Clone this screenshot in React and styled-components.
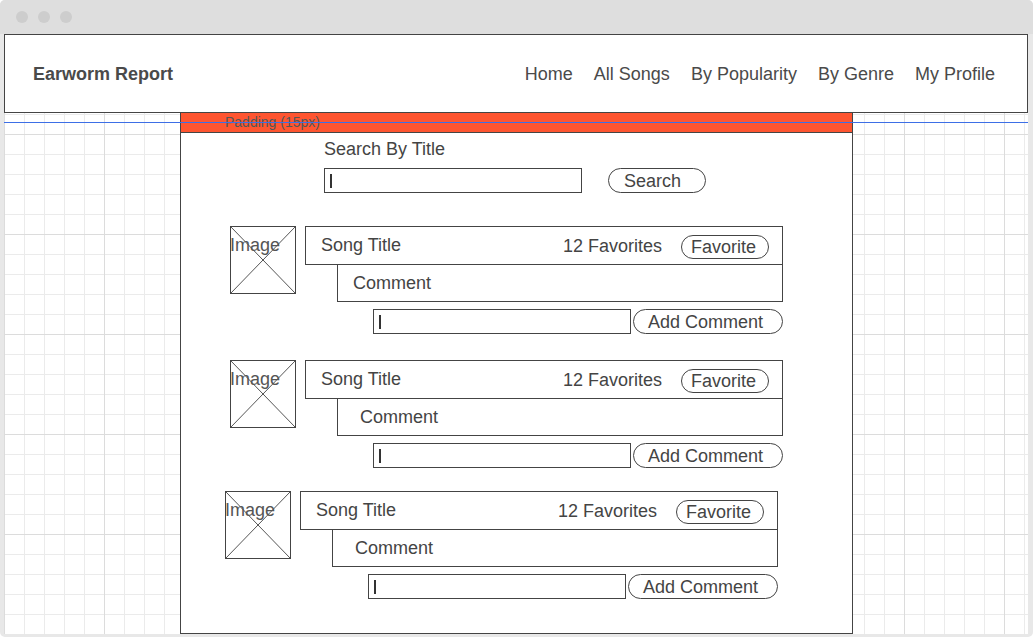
import React from "react";
import styled, { createGlobalStyle } from "styled-components";

const GlobalStyle = createGlobalStyle`
  html, body {
    margin: 0;
    padding: 0;
    background: #ffffff;
  }
  * {
    box-sizing: border-box;
  }
  body {
    font-family: "Liberation Sans", Arial, sans-serif;
    color: #444444;
  }
`;

const songs = [
  { id: 1, shift: 49, top: 33, indent: 15 },
  { id: 2, shift: 49, top: 26, indent: 22 },
  { id: 3, shift: 44, top: 23, indent: 22 },
];

const navLinks = ["Home", "All Songs", "By Popularity", "By Genre", "My Profile"];

const SongCard = ({ shift, top, indent }) => {
  return (
    <Card $shift={shift} $top={top}>
      <ImageBox>
        <Cross viewBox="0 0 64 66" preserveAspectRatio="none">
          <line x1="0" y1="0" x2="64" y2="66" />
          <line x1="64" y1="0" x2="0" y2="66" />
        </Cross>
        <ImageLabel>Image</ImageLabel>
      </ImageBox>
      <Details>
        <TitleBox>
          <span>Song Title</span>
          <Favorites>
            <span>12 Favorites</span>
            <Pill $width={88} $pad={9}>
              Favorite
            </Pill>
          </Favorites>
        </TitleBox>
        <CommentBox $indent={indent}>Comment</CommentBox>
        <CommentRow>
          <TextField $width={258}>
            <Caret />
          </TextField>
          <Pill $width={150} $pad={14} $height={25}>
            Add Comment
          </Pill>
        </CommentRow>
      </Details>
    </Card>
  );
};

const App = () => {
  return (
    <>
      <GlobalStyle />
      <Window>
        <TitleBar>
          <Dot />
          <Dot />
          <Dot />
        </TitleBar>
        <Viewport>
          <Guide />
          <Header>
            <Brand>Earworm Report</Brand>
            <Nav>
              {navLinks.map((link) => (
                <NavLink key={link}>{link}</NavLink>
              ))}
            </Nav>
          </Header>
          <Main>
            <Panel>
              <PaddingBand>Padding (15px)</PaddingBand>
              <Search>
                <SearchLabel>Search By Title</SearchLabel>
                <SearchRow>
                  <TextField $width={258}>
                    <Caret />
                  </TextField>
                  <Pill $width={98} $pad={15} $height={25}>
                    Search
                  </Pill>
                </SearchRow>
              </Search>
              {songs.map((song) => (
                <SongCard key={song.id} {...song} />
              ))}
            </Panel>
          </Main>
        </Viewport>
      </Window>
    </>
  );
};

export default App;

const Window = styled.div`
  width: 1033px;
  height: 637px;
  display: flex;
  flex-direction: column;
  background: #e8e8e8;
  border-radius: 5px;
  overflow: hidden;
`;

const TitleBar = styled.div`
  height: 34px;
  flex-shrink: 0;
  display: flex;
  align-items: center;
  gap: 10px;
  padding-left: 16px;
  background: #dedede;
`;

const Dot = styled.span`
  width: 12px;
  height: 12px;
  border-radius: 50%;
  background: #cdcdcd;
`;

const Viewport = styled.div`
  position: relative;
  flex: 1;
  display: flex;
  flex-direction: column;
  margin: 0 5px 3px 4px;
  background-color: #ffffff;
  background-image: linear-gradient(#dcdcdc 1px, transparent 1px),
    linear-gradient(90deg, #dcdcdc 1px, transparent 1px),
    linear-gradient(#ebebeb 1px, transparent 1px),
    linear-gradient(90deg, #ebebeb 1px, transparent 1px);
  background-size: 100px 100px, 100px 100px, 20px 20px, 20px 20px;
`;

const Guide = styled.div`
  position: absolute;
  top: 88px;
  left: 0;
  right: 0;
  height: 1px;
  background: #3d6fe6;
  z-index: 2;
`;

const Header = styled.header`
  height: 79px;
  flex-shrink: 0;
  display: flex;
  align-items: center;
  justify-content: space-between;
  padding: 2px 32px 0 28px;
  background: #ffffff;
  border: 1px solid #444444;
`;

const Brand = styled.div`
  font-size: 18px;
  font-weight: 700;
  color: #4a4a4a;
`;

const Nav = styled.nav`
  display: flex;
  gap: 21px;
`;

const NavLink = styled.span`
  font-size: 18px;
  color: #4a4a4a;
`;

const Main = styled.div`
  flex: 1;
  display: flex;
`;

const Panel = styled.section`
  width: 673px;
  margin-left: 176px;
  background: #ffffff;
  border: 1px solid #444444;
  border-top: none;
`;

const PaddingBand = styled.div`
  height: 20px;
  padding-left: 44px;
  background: #fe5530;
  border-bottom: 1px solid #444444;
  font-size: 14px;
  line-height: 19px;
  color: #555555;
`;

const Search = styled.div`
  padding: 6px 0 0 143px;
`;

const SearchLabel = styled.div`
  font-size: 18px;
  line-height: 21px;
`;

const SearchRow = styled.div`
  display: flex;
  gap: 26px;
  margin-top: 8px;
`;

const TextField = styled.div`
  width: ${(p) => p.$width}px;
  height: 25px;
  display: flex;
  align-items: center;
  padding-left: 5px;
  border: 1px solid #444444;
  background: #ffffff;
`;

const Caret = styled.span`
  width: 1.5px;
  height: 14px;
  background: #333333;
`;

const Pill = styled.div`
  width: ${(p) => p.$width}px;
  height: ${(p) => p.$height || 24}px;
  display: flex;
  align-items: center;
  padding-left: ${(p) => p.$pad}px;
  padding-top: 1px;
  border: 1px solid #444444;
  border-radius: 13px;
  background: #ffffff;
  font-size: 18px;
  line-height: 21px;
  white-space: nowrap;
`;

const Card = styled.div`
  display: flex;
  align-items: flex-start;
  margin-top: ${(p) => p.$top}px;
  padding-left: ${(p) => p.$shift}px;
`;

const ImageBox = styled.div`
  position: relative;
  width: 66px;
  height: 68px;
  flex-shrink: 0;
  padding-top: 8px;
  border: 1px solid #444444;
  font-size: 18px;
  line-height: 21px;
  color: #555555;
`;

const Cross = styled.svg`
  position: absolute;
  inset: 0;
  width: 100%;
  height: 100%;
  stroke: #555555;
  stroke-width: 1;
`;

const ImageLabel = styled.span`
  position: relative;
  margin-left: -1px;
`;

const Details = styled.div`
  width: 478px;
  margin-left: 9px;
`;

const TitleBox = styled.div`
  height: 39px;
  display: flex;
  align-items: center;
  justify-content: space-between;
  padding: 0 13px 0 15px;
  border: 1px solid #444444;
  font-size: 18px;
  line-height: 21px;
`;

const Favorites = styled.div`
  display: flex;
  align-items: center;
  gap: 19px;
  padding-top: 2px;
`;

const CommentBox = styled.div`
  height: 38px;
  margin: -1px 0 0 32px;
  display: flex;
  align-items: center;
  padding: 1px 0 0 ${(p) => p.$indent}px;
  border: 1px solid #444444;
  font-size: 18px;
  line-height: 21px;
`;

const CommentRow = styled.div`
  display: flex;
  gap: 2px;
  margin: 7px 0 0 68px;
`;
